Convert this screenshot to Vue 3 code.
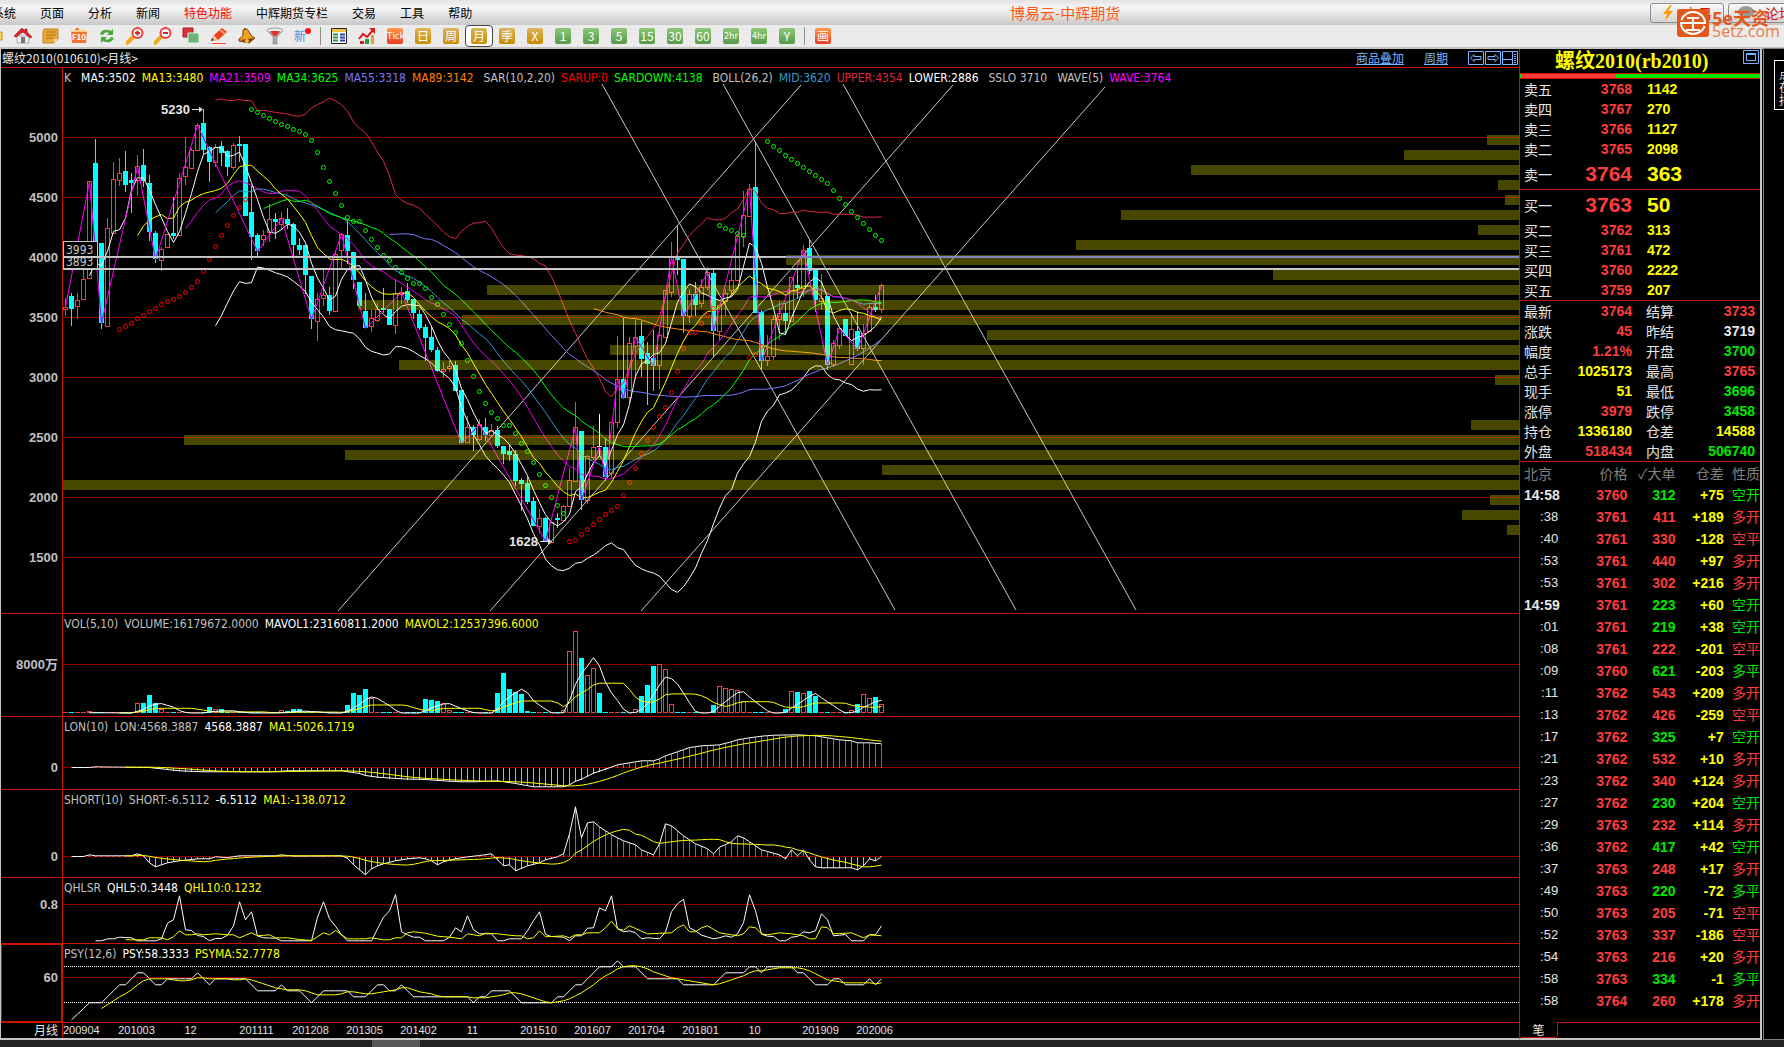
<script setup>
const STEP = 6
const FIRST = 65
const xAt = (i) => FIRST + i * STEP + 0.5

const menus = ['系统', '页面', '分析', '新闻', '特色功能', '中辉期货专栏', '交易', '工具', '帮助']

const tools = [
  'folder', 'home', 'note', 'f10', 'refresh', 'zoomin', 'zoomout', 'copy', 'pen', 'bell', 'filter', 'new', '|',
  'table', 'chart', 'Tick', '日', '周', '月', '季', 'X', '1', '3', '5', '15', '30', '60', '2hr', '4hr', 'Y', '|', '画',
]
const icons = ['folder', 'home', 'note', 'f10', 'refresh', 'zoomin', 'zoomout', 'copy', 'pen', 'bell', 'filter', 'new', 'table', 'chart']
const tone = (t) => (['Tick', '画'].includes(t) ? 'hot' : ['日', '周', '月', '季', 'X'].includes(t) ? 'gold' : 'leaf')

// kind, high, body top, body bottom, low (r = up, c = down, w = unchanged)
const candles = `r298,307,309,316 c293,296,309,326 r293,300,306,319 r270,279,299,299 r181,181,278,278 c139,163,243,243
c243,243,323,329 r218,228,326,326 r162,179,233,233 r158,173,180,186 c151,171,185,192 c173,180,183,213 r155,166,180,196
c149,165,181,187 c175,183,232,241 c231,233,259,263 r247,249,260,271 r234,234,247,247 c197,233,236,239 r173,178,235,235
r137,167,176,185 r148,150,168,168 r123,125,150,150 c109,123,150,154 c146,147,162,182 r144,147,162,167 c141,146,153,166
c150,151,167,176 r143,145,167,170 c136,144,146,162 c144,144,216,216 c186,212,237,260 c233,235,251,256 r230,235,239,246
r204,219,232,242 c213,219,222,239 r212,218,224,230 c208,219,224,229 c223,224,245,257 c238,245,250,255 c245,245,275,294
c276,276,319,329 r293,299,321,341 r270,295,298,306 c287,295,311,315 r250,254,311,311 r233,234,250,268 c220,235,251,264
c252,252,280,289 c282,282,306,308 c293,311,328,328 r310,318,326,332 r303,309,320,322 c288,308,310,313 c309,309,325,325
r279,293,325,334 r287,292,294,304 c283,291,300,303 c299,299,313,319 c310,314,328,330 c324,327,338,361 c326,337,350,352
c347,350,371,372 r362,369,371,378 r361,366,368,372 c361,365,391,391 c390,390,443,444 r416,427,442,443 c425,427,435,451
r419,424,439,441 c418,427,435,441 r424,430,435,435 c426,430,446,448 c446,446,454,464 c444,451,455,461 c450,454,481,486
c478,480,484,511 c477,483,502,504 c497,501,526,526 r509,518,526,533 c517,518,541,541 r522,522,542,542 c513,518,520,528
r505,506,520,520 r468,480,506,506 r402,427,481,481 c431,431,500,510 r455,456,500,504 r426,447,457,460 w414,446,446,456
c438,447,477,481 r422,422,473,479 r336,379,422,428 c318,379,398,399 r337,343,397,403 r318,337,346,379 c321,336,359,377
c342,353,364,405 c330,358,366,391 r327,335,365,389 r290,290,337,337 r242,257,292,297 c226,257,260,275 c259,259,316,333
r289,294,316,323 c282,294,305,316 r279,287,303,308 r267,272,287,290 c269,273,331,357 r305,305,331,341 r289,293,301,316
r268,280,290,297 r234,236,280,280 r191,215,236,247 r184,189,216,216 c141,187,313,313 c310,312,361,369 r335,356,360,366
r315,319,356,360 r301,313,319,340 c303,313,321,335 r277,277,321,321 c268,285,288,299 r245,250,288,297 c240,248,271,274
c270,270,300,312 r274,298,301,310 c296,296,365,370 r340,343,364,367 r328,328,345,349 c319,319,336,336 r313,329,364,364
c311,331,349,351 r324,333,348,365 r304,307,331,331 c295,307,310,312 r284,285,309,313`
  .split(/\s+/)
  .map((s, i) => {
    const [h, t, b, l] = s.slice(1).split(',').map(Number)
    return { kind: s[0], x: FIRST + i * STEP, h, t, b, l, close: s[0] === 'r' ? t : b }
  })
const COUNT = candles.length

const mean = (v, n) => v.map((_, i) => {
  const w = v.slice(Math.max(0, i - n + 1), i + 1)
  return i < n - 1 || w.some((k) => k == null) ? null : w.reduce((a, b) => a + b, 0) / n
})
const points = (v) => v.map((y, i) => (y == null ? '' : `${xAt(i)},${y.toFixed(1)}`)).filter(Boolean).join(' ')
const lineOf = (color, v) => ({ color, pts: points(v) })

const closes = candles.map((c) => c.close + 0.5)
const mid = mean(closes, 26)
const band = (k) => mid.map((m, i) => {
  if (m == null) return null
  const w = closes.slice(i - 25, i + 1)
  return m + k * Math.sqrt(w.reduce((a, y) => a + (y - m) ** 2, 0) / 26)
})
const mainLines = [
  lineOf('#dc2846', band(-2)), lineOf('#ffffff', band(2)), lineOf('#2d9bd2', mid),
  lineOf('#ff8c00', mean(closes, 89)), lineOf('#7878ff', mean(closes, 55)), lineOf('#00ff00', mean(closes, 34)),
  lineOf('#e600e6', mean(closes, 21)), lineOf('#ffff00', mean(closes, 13)), lineOf('#ffffff', mean(closes, 5)),
]
const wave = [0, 4, 6, 12, 15, 22, 32, 36, 41, 46, 50, 56, 66, 69, 80, 85, 86, 89, 90, 92, 93, 95, 98, 101, 103, 107, 108, 114, 116, 123, 127, 129, 132, 136]
  .map((i) => `${xAt(i)},${closes[i]}`).join(' ')

const sar = [
  ['#ff0000', 9, [329, 326, 323, 318, 315, 311, 308, 304, 301, 299, 296, 292, 287, 281, 271, 259, 246, 235, 225, 215, 207, 199]],
  ['#00ff00', 31, [109, 112, 115, 118, 121, 124, 126, 129, 131, 134, 140, 152, 167, 181, 193, 205, 217, 221, 221, 230, 239, 247, 255, 260, 267, 272, 278, 283, 283, 288, 297, 304, 314, 324, 332, 343, 360, 376, 391, 403, 412, 418, 425, 425, 433, 443, 451, 462, 474, 485, 497, 505, 513]],
  ['#ff0000', 84, [541, 540, 534, 529, 524, 519, 514, 510, 506, 495, 482, 468, 453, 440, 427, 416, 407, 392, 371, 348, 332, 332, 323, 315, 308]],
  ['#00ff00', 109, [225, 228, 230, 233, 235]],
  ['#ff0000', 114, [357, 354, 346]],
  ['#00ff00', 117, [141, 146, 150, 155, 159, 163, 167, 171, 175, 179, 183, 190, 198, 204, 211, 217, 223, 229, 235, 240]],
].flatMap(([color, from, ys]) => ys.map((y, k) => ({ color, y, x: xAt(from + k) })))

// price distribution: top of the bar and its distance from the right edge
const profile = [[135, 32], [150, 115], [165, 328], [180, 21], [195, 14], [210, 398], [225, 41], [240, 443], [255, 733], [270, 246], [285, 1032], [300, 1161], [315, 1057], [330, 532], [345, 909], [360, 1120], [375, 24], [420, 48], [435, 1335], [450, 1174], [465, 637], [480, 1456], [495, 29], [510, 57], [525, 12]]

const rays = [[602, 84, 895, 610], [723, 84, 1016, 610], [843, 84, 1136, 610], [338, 611, 801, 85], [490, 611, 953, 85], [641, 611, 1105, 87]]

const volumes = Array(COUNT).fill(1)
const setVol = (from, ...v) => v.forEach((n, k) => { volumes[from + k] = n })
setVol(4, 2); setVol(12, 10, 10, 18, 10, 4); setVol(24, 6, 4, 4); setVol(36, 3, 2, 4, 4)
setVol(47, 8, 20, 18, 24, 15); setVol(60, 14, 13, 12, 10, 3); setVol(72, 20, 40, 24, 21, 19, 2)
setVol(83, 3, 62, 82, 55, 38, 45, 20); setVol(95, 4, 17, 28, 47, 49, 44, 9); setVol(108, 8, 27, 25, 24, 23, 12)
setVol(120, 4, 22, 21, 20, 22, 17); setVol(131, 3, 9, 19, 15, 16, 9)
const volLine = (n) => mean(volumes.map((v) => 714 - v), n)

// "index:value" knots, joined by straight lines; a value is a third of a pixel below y = 600
function knots(text) {
  const k = text.split(' ').map((s) => s.split(':').map(Number))
  const out = Array(COUNT).fill(null)
  k.forEach(([i, v], n) => {
    out[i] = 600.5 + v / 3
    const next = k[n + 1]
    if (next) for (let j = i + 1; j < next[0]; j++) out[j] = 600.5 + (v + ((next[1] - v) * (j - i)) / (next[0] - i)) / 3
  })
  return out
}
const lon = knots('1:501 4:501 5:499 14:501 16:505 19:511 23:514 34:514 37:511 46:511 49:519 50:525 52:530 56:535 60:537 63:541 66:544 68:544 72:541 75:549 78:559 83:559 84:553 85:542 86:536 88:518 89:512 90:506 92:493 94:487 96:481 98:481 99:475 100:466 102:454 104:441 106:436 109:433 111:424 112:418 114:412 116:407 118:404 122:403 125:406 127:412 129:418 131:421 132:427 134:427 136:430')
const short = knots('1:768 3:768 4:763 5:766 11:766 12:760 13:766 14:787 15:799 16:793 17:787 19:781 22:775 24:775 25:769 27:771 29:766 35:766 36:763 38:767 46:766 47:773 48:793 49:808 50:823 51:805 52:796 53:790 55:781 57:775 59:772 60:775 61:781 62:793 63:784 65:775 67:769 69:765 71:760 72:778 73:796 74:793 75:811 77:796 79:787 80:778 82:769 83:760 84:700 85:619 86:712 87:667 88:664 89:679 91:703 93:721 95:733 96:748 98:763 99:730 100:670 101:676 103:706 105:730 107:745 108:760 109:740 111:724 112:706 113:712 115:736 116:748 119:763 120:775 121:748 122:766 123:749 124:778 125:799 126:802 131:802 132:808 133:796 134:775 135:781 136:768')
const qhl5 = knots('5:1021 6:1021 7:1015 8:1015 9:1010 11:1012 12:1021 15:1021 16:1015 17:968 18:958 19:886 20:988 21:990 22:1005 23:1008 24:1021 25:1014 26:1014 27:1004 28:976 29:904 30:958 31:934 32:1006 33:1012 35:1013 36:1021 41:1021 42:950 43:904 44:955 45:977 46:1003 47:1021 51:1021 52:985 53:950 54:931 55:882 56:994 57:1003 58:1010 59:1010 60:1021 63:1021 64:1010 65:982 66:994 67:946 68:988 69:1000 71:1000 72:1021 73:1021 74:1015 76:1015 77:991 78:961 79:934 80:1002 81:1008 83:1010 84:1021 85:1006 86:1006 87:983 88:982 89:922 90:931 91:886 92:985 93:994 94:991 95:997 96:1015 97:1012 99:1015 100:995 101:934 102:910 103:896 104:982 105:991 106:1004 108:1015 109:1012 110:1006 111:1010 112:1000 113:967 114:883 115:931 116:1001 117:1007 118:1008 119:1021 120:1021 121:1010 122:1008 123:994 124:997 125:991 126:940 127:958 128:1006 130:1002 131:1021 133:1021 134:1003 135:1003 136:976')
const qhl10 = knots('10:1018 13:1018 14:1012 16:1012 17:1018 18:1009 19:991 20:1003 21:1003 22:1000 23:1003 25:1000 27:1003 28:1003 29:1012 31:997 32:1006 34:1003 35:1012 37:1012 39:1017 41:1020 43:997 44:1003 45:990 47:1015 50:1015 51:1012 53:1018 54:1018 55:1012 56:1012 57:997 58:994 60:998 62:1007 64:1010 66:1015 67:1000 69:1006 70:998 72:1000 75:1006 76:1006 77:1015 78:1012 79:991 80:1009 83:1006 84:1012 85:1003 86:1003 87:997 89:997 90:982 91:962 92:985 93:989 94:976 95:984 97:1000 101:997 102:982 103:973 104:994 105:994 106:982 107:976 109:997 112:1006 113:1000 114:979 115:982 116:1000 117:1003 119:997 121:1000 123:1006 124:1015 125:1015 126:979 127:982 128:1000 131:997 133:1012 134:1003 136:1006')
const psy = knots('1:1258 4:1207 6:1207 9:1153 10:1153 12:1117 13:1117 15:1153 16:1153 17:1135 21:1135 22:1117 24:1153 25:1135 30:1135 32:1171 35:1171 36:1153 37:1171 39:1171 41:1207 43:1171 47:1171 48:1189 50:1189 52:1153 53:1153 54:1171 55:1171 56:1153 58:1189 67:1189 68:1207 69:1189 70:1189 71:1171 74:1171 76:1207 81:1207 82:1189 83:1189 85:1153 86:1153 89:1099 91:1099 92:1081 93:1099 95:1099 97:1135 102:1135 103:1153 108:1153 110:1117 113:1117 114:1099 115:1099 116:1117 117:1099 121:1099 122:1117 123:1117 125:1153 127:1153 128:1135 129:1135 130:1153 133:1153 134:1135 135:1153 136:1135')

const stems = (v, zero) => v.map((y, i) => (y == null ? null : {
  x: FIRST + i * STEP, y: Math.round(Math.min(y, zero)), h: Math.round(Math.abs(y - zero)), color: y > zero ? '#00ffff' : '#ff3c3c',
})).filter((s) => s && s.h > 0)

const G = '#c0c0c0', W = '#ffffff', Y = '#ffff00'
const panels = [
  {
    id: 'k', top: 68, height: 545, axis: [5000, 4500, 4000, 3500, 3000, 2500, 2000, 1500].map((t, n) => [137 + n * 60, t]),
    legend: [['K', G, 1], ['MA5:3502', W], ['MA13:3480', Y], ['MA21:3509', '#ff00ff'], ['MA34:3625', '#00ff00'], ['MA55:3318', '#7878ff'], ['MA89:3142', '#ff8000', 1],
      ['SAR(10,2,20)', G], ['SARUP:0', '#ff0000'], ['SARDOWN:4138', '#00ff00', 1], ['BOLL(26,2)', G], ['MID:3620', '#2d9bd2'], ['UPPER:4354', '#dc2846'], ['LOWER:2886', W, 1],
      ['SSLO 3710', G, 1], ['WAVE(5)', G], ['WAVE:3764', '#ff00ff']],
    lines: mainLines,
  },
  {
    id: 'vol', top: 614, height: 102, axis: [[664, '8000万']],
    legend: [['VOL(5,10)', G], ['VOLUME:16179672.0000', G], ['MAVOL1:23160811.2000', W], ['MAVOL2:12537396.6000', Y]],
    lines: [lineOf(Y, volLine(10)), lineOf(W, volLine(5))],
  },
  {
    id: 'lon', top: 717, height: 72, axis: [[767, '0']], stems: stems(lon, 767.5),
    legend: [['LON(10)', G], ['LON:4568.3887', G], ['4568.3887', W], ['MA1:5026.1719', Y]],
    lines: [lineOf(W, lon), lineOf(Y, mean(lon, 10))],
  },
  {
    id: 'short', top: 790, height: 87, axis: [[856, '0']], stems: stems(short, 856.5),
    legend: [['SHORT(10)', G], ['SHORT:-6.5112', G], ['-6.5112', W], ['MA1:-138.0712', Y]],
    lines: [lineOf(W, short), lineOf(Y, mean(short, 10))],
  },
  {
    id: 'qhl', top: 878, height: 65, axis: [[904, '0.8']],
    legend: [['QHLSR', G], ['QHL5:0.3448', W], ['QHL10:0.1232', Y]],
    lines: [lineOf(W, qhl5), lineOf(Y, qhl10)],
  },
  {
    id: 'psy', top: 944, height: 78, axis: [[977, '60']], guides: [966, 1002],
    legend: [['PSY(12,6)', G], ['PSY:58.3333', W], ['PSYMA:52.7778', Y]],
    lines: [lineOf(W, psy), lineOf(Y, mean(psy, 6))],
  },
]

const dates = [[12, '201003'], [21, '12'], [32, '201111'], [41, '201208'], [50, '201305'], [59, '201402'], [68, '11'], [79, '201510'], [88, '201607'], [97, '201704'], [106, '201801'], [115, '10'], [126, '201909'], [135, '202006']]

const asks = [['卖五', 3768, 1142], ['卖四', 3767, 270], ['卖三', 3766, 1127], ['卖二', 3765, 2098], ['卖一', 3764, 363]]
const bids = [['买一', 3763, 50], ['买二', 3762, 313], ['买三', 3761, 472], ['买四', 3760, 2222], ['买五', 3759, 207]]
const stats = [
  ['最新', '3764', 'r', '结算', '3733', 'r'], ['涨跌', '45', 'r', '昨结', '3719', 'w'], ['幅度', '1.21%', 'r', '开盘', '3700', 'g'],
  ['总手', '1025173', 'y', '最高', '3765', 'r'], ['现手', '51', 'y', '最低', '3696', 'g'], ['涨停', '3979', 'r', '跌停', '3458', 'g'],
  ['持仓', '1336180', 'y', '仓差', '14588', 'y'], ['外盘', '518434', 'r', '内盘', '506740', 'g'],
]
const ticks = `14:58 3760 312 +75 空开 g|:38 3761 411 +189 多开 r|:40 3761 330 -128 空平 r|:53 3761 440 +97 多开 r|:53 3761 302 +216 多开 r|14:59 3761 223 +60 空开 g|:01 3761 219 +38 空开 g|:08 3761 222 -201 空平 r|:09 3760 621 -203 多平 g|:11 3762 543 +209 多开 r|:13 3762 426 -259 空平 r|:17 3762 325 +7 空开 g|:21 3762 532 +10 多开 r|:23 3762 340 +124 多开 r|:27 3762 230 +204 空开 g|:29 3763 232 +114 多开 r|:36 3762 417 +42 空开 g|:37 3763 248 +17 多开 r|:49 3763 220 -72 多平 g|:50 3763 205 -71 空平 r|:52 3763 337 -186 空平 r|:54 3763 216 +20 多开 r|:58 3763 334 -1 多平 g|:58 3764 260 +178 多开 r`
  .split('|').map((s) => s.split(' '))
</script>

<template>
  <div class="app">
    <header class="menubar">
      <nav class="menus">
        <a v-for="m in menus" :key="m" href="#" :class="{ special: m === '特色功能' }">{{ m }}</a>
      </nav>
      <h1>博易云-中辉期货</h1>
      <div class="actions">
        <button type="button"><svg width="12" height="16"><path d="M8 0 1 9h4l-2 7 8-10H6l4-6z" fill="#f90" /></svg>交易</button>
        <button type="button"><svg width="18" height="14"><ellipse cx="9" cy="6" rx="8" ry="6" fill="#999" /><path d="M4 9v5l6-4z" fill="#999" /></svg>论坛</button>
      </div>
      <div class="watermark">
        <svg width="32" height="28" viewBox="0 0 32 28">
          <rect width="32" height="28" rx="3" fill="#e4571b" />
          <ellipse cx="16" cy="14" rx="12" ry="11" fill="none" stroke="#fff" stroke-width="2" />
          <path d="M10 9h12M4 14h24M16 9v12M9 21h14" fill="none" stroke="#fff" stroke-width="2" />
          <path d="M2 11h3v2H2zM27 15h3v2h-3z" fill="#e4571b" />
        </svg>
        <div class="brand"><b>5e天资</b><span>5etz.com</span></div>
      </div>
    </header>

    <div class="toolbar">
      <template v-for="(t, n) in tools" :key="n">
        <i v-if="t === '|'" class="sep"></i>
        <button v-else type="button" :class="{ active: t === '月' }" :aria-label="t">
          <svg v-if="icons.includes(t)" width="18" height="18" viewBox="0 0 18 18">
            <path v-if="t === 'folder'" d="M1 5h15v8H1z" fill="#ffd452" stroke="#c88a10" />
            <g v-else-if="t === 'home'">
              <path d="M3 9h12v7H3z" fill="#f3f3f3" stroke="#aaa" /><path d="M7 10h4v6H7z" fill="#777" />
              <path d="M0 9 8 1l3 3V2h2v3l5 5-2 1-7-6-7 5z" fill="#e0252b" stroke="#8e1014" stroke-width=".6" />
            </g>
            <g v-else-if="t === 'note'">
              <path d="M2 2h14v10l-4 4H1V5z" fill="#e9a93a" stroke="#c58418" /><path d="M4 5h10M4 8h10M4 11h7" stroke="#b26f0c" /><path d="M12 16v-4h4z" fill="#ffe0a0" />
            </g>
            <g v-else-if="t === 'f10'">
              <path d="M1 3h4l1-2h3v2h8l-1 13H2z" fill="#f0722c" /><path d="M1 3h16v2H1z" fill="#ffd08a" />
              <text x="9" y="13" text-anchor="middle" font-size="8" font-weight="bold" fill="#fff">F10</text>
            </g>
            <g v-else-if="t === 'refresh'" fill="#4aa83a">
              <path d="M2 7q2-5 8-4 2 0 3 1l2-2v6H9l2-2Q7 4 5 8z" /><path d="M16 11q-2 5-8 4-2 0-3-1l-2 2v-6h6l-2 2q4 2 6-2z" />
            </g>
            <g v-else-if="t === 'zoomin' || t === 'zoomout'">
              <path d="m1 16 6-6" stroke="#f5a81c" stroke-width="4" stroke-linecap="round" /><circle cx="11.500" cy="6" r="5" fill="#fff" stroke="#f0403c" stroke-width="2" />
              <path :d="t === 'zoomin' ? 'M9 6h5M11.500 3.500v5' : 'M9 6h5'" stroke="#e2201c" stroke-width="2" />
            </g>
            <g v-else-if="t === 'copy'">
              <path d="M1 1h10v9H1z" fill="#d8343a" stroke="#a41f24" /><path d="M6 6h11v10H6z" fill="#69b376" stroke="#e3efe4" />
            </g>
            <g v-else-if="t === 'pen'">
              <path d="m1 14 3-6 8-7 5 4-9 8z" fill="#f0401c" /><path d="m1 14 3-6 4 5z" fill="#f3c488" /><path d="m1 14 1-3 2 2z" fill="#333" /><path d="m10 3 5 4" stroke="#ff9a7a" stroke-width="2" /><path d="M2 16.500h14" stroke="#ff4a3a" />
            </g>
            <g v-else-if="t === 'bell'">
              <path d="M5 3q4-3 6 2 1 4 6 6l-6 5-10-2v-2q5-2 4-9z" fill="#f0a31e" stroke="#7a3c08" /><path d="m2 13 14-2-5 5z" fill="#7a3c08" /><circle cx="9" cy="14" r="2" fill="#f6c040" /><circle cx="7" cy="2" r="1" fill="#8e4a10" />
            </g>
            <g v-else-if="t === 'filter'">
              <path d="m2 4 5 6v7h4v-7l5-6z" fill="#a6a6a6" stroke="#777" stroke-width=".5" /><ellipse cx="9" cy="3.500" rx="8" ry="2.500" fill="#eee" stroke="#999" /><path d="M4 4h10l-4 5H8z" fill="#e83030" />
            </g>
            <g v-else-if="t === 'new'">
              <text x="6" y="14" text-anchor="middle" font-size="12" fill="#4a90e2">新</text><circle cx="14" cy="4" r="3" fill="#f11" />
            </g>
            <g v-else-if="t === 'table'">
              <path d="M1.500 1.500h15v15h-15z" fill="#fff" stroke="#222" /><path d="M2 2h14v3H2z" fill="#f5c23c" /><path d="M3 7.500h5M3 10.500h5M3 13.500h5" stroke="#24a03a" stroke-width="2" /><path d="M10 7.500h5M10 10.500h5M10 13.500h5" stroke="#2840a8" stroke-width="2" />
            </g>
            <g v-else-if="t === 'chart'">
              <path d="M2 14h4v3H2z" fill="#c22" /><path d="M7 12h4v5H7z" fill="#2a9a3a" /><path d="M13 8h3v9h-3z" fill="#e8a020" /><path d="m1 12 4-5 4 3 7-8" fill="none" stroke="#e4161c" stroke-width="2" /><path d="M11 1h6v6z" fill="#e4161c" />
            </g>
          </svg>
          <span v-else class="chip" :class="[tone(t), { small: t.length > 2 }]">{{ t }}</span>
        </button>
      </template>
    </div>

    <main class="desk">
      <section class="chart">
        <div class="caption">
          <span>螺纹2010(010610)&lt;月线&gt;</span>
          <a href="#" class="first">商品叠加</a>
          <a href="#">周期</a>
          <div class="tiles">
            <svg width="16" height="14"><path d="M.5.5h15v13H.5zM6 3.500v2h7v3H6v2L2.500 7z" /></svg>
            <svg width="16" height="14"><path d="M.5.5h15v13H.5zM10 3.500v2H3v3h7v2L13.500 7z" /></svg>
            <svg width="16" height="14"><path d="M.5.5h15v13H.5zM10.500 1v13M1 8.500h9M12 3.500h2M12 5.500h2M12 7.500h2M12 9.500h2M12 11.500h2" /></svg>
          </div>
        </div>

        <div v-for="p in panels" :key="p.id" class="panel" :class="p.id">
          <svg class="axis" :height="p.height">
            <g :transform="`translate(-1,${-p.top})`">
              <text v-for="a in p.axis" :key="a[0]" x="58" :y="a[0] + 5" text-anchor="end">{{ a[1] }}</text>
            </g>
          </svg>
          <svg class="plot" width="100%" :height="p.height">
            <g :transform="`translate(-63,${-p.top})`">
              <g class="sharp">
                <line v-for="a in p.axis" :key="a[0]" x1="64" x2="110%" :y1="a[0] + 0.5" :y2="a[0] + 0.5" stroke="#a00000" stroke-dasharray="1 1" />
                <line v-for="g in p.guides" :key="g" x1="64" x2="110%" :y1="g + 0.5" :y2="g + 0.5" stroke="#fff" stroke-dasharray="1 1" />
                <rect v-for="s in p.stems" :key="s.x" :x="s.x" :y="s.y" width="1" :height="s.h" :fill="s.color" />
                <template v-if="p.id === 'vol'">
                  <template v-for="(c, i) in candles" :key="i">
                    <rect v-if="c.kind === 'r' && volumes[i] > 1" :x="c.x - 1.5" :y="713.5 - volumes[i]" width="4" :height="volumes[i] - 1" fill="none" stroke="#ff3c3c" />
                    <rect v-else :x="c.x - 2" :y="713 - volumes[i]" width="5" :height="volumes[i]" :fill="c.kind === 'r' ? '#ff3c3c' : '#00ffff'" />
                  </template>
                </template>
                <template v-if="p.id === 'k'">
                  <template v-for="c in candles" :key="c.x">
                    <path v-if="c.kind === 'r'" :d="`M${c.x + 0.5} ${c.h}V${c.t}M${c.x + 0.5} ${c.b}V${c.l}M${c.x - 1.5} ${c.t + 0.5}h4V${c.b + 0.5}h-4z`" fill="none" stroke="#ff3c3c" />
                    <path v-else-if="c.kind === 'w'" :d="`M${c.x + 0.5} ${c.h}V${c.l}M${c.x - 2} ${c.t + 0.5}h5`" stroke="#fff" />
                    <path v-else :d="`M${c.x} ${c.h}h1V${c.t}h2V${c.b}h-2V${c.l}h-1V${c.b}h-2V${c.t}h2z`" fill="#00ffff" />
                  </template>
                </template>
              </g>
              <template v-if="p.id === 'k'">
                <line v-for="r in rays" :key="r[0]" :x1="r[0]" :y1="r[1]" :x2="r[2]" :y2="r[3]" stroke="#c8c8c8" />
              </template>
              <polyline v-for="(l, n) in p.lines" :key="n" :points="l.pts" fill="none" :stroke="l.color" />
              <template v-if="p.id === 'k'">
                <clipPath id="falling">
                  <template v-for="c in candles" :key="c.x"><rect v-if="c.kind === 'c'" :x="c.x - 2" :y="c.t" width="5" :height="c.b - c.t" /></template>
                </clipPath>
                <polyline :points="wave" fill="none" stroke="#ff00ff" />
                <polyline :points="wave" fill="none" stroke="#3c3cff" clip-path="url(#falling)" />
                <circle v-for="(s, n) in sar" :key="n" :cx="s.x" :cy="s.y + 0.5" r="2" fill="none" :stroke="s.color" />
                <text x="190" y="114" text-anchor="end" class="mark">5230</text>
                <path d="M192 109.500h9" stroke="#ddd" /><path d="m203 109.500-4-3v6z" fill="#ddd" />
                <text x="538" y="546" text-anchor="end" class="mark">1628</text>
                <path d="M540 541.500h9" stroke="#ddd" /><path d="m552 541.500-4-3v6z" fill="#ddd" />
              </template>
            </g>
            <g v-if="p.id === 'k'" class="sharp" transform="translate(0,-68)">
              <rect v-for="b in profile" :key="b[0]" x="100%" :y="b[0]" :width="b[1]" height="10" :transform="`translate(${-b[1]},0)`" fill="#ffff00" fill-opacity=".28" />
              <rect x="0" y="256" width="100%" height="2" fill="#c8c8c8" />
              <line x1="0" x2="100%" y1="257.500" y2="257.500" stroke="#4fd0c0" stroke-dasharray="1 1" />
              <rect x="100%" y="256" width="733" height="2" transform="translate(-733,0)" fill="#8484c8" />
              <rect x="0" y="268" width="100%" height="2" fill="#c8c8c8" />
              <rect x=".5" y="257.500" width="34" height="11" stroke="#c8c8c8" /><text x="3" y="266" class="level">3893</text>
              <rect x=".5" y="241.500" width="34" height="15" stroke="#c8c8c8" /><text x="3" y="254" class="level">3993</text>
            </g>
          </svg>
          <div class="legend">
            <span v-for="l in p.legend" :key="l[0]" :style="{ color: l[1] }" :class="{ end: l[2] }">{{ l[0] }}</span>
          </div>
        </div>

        <div class="dates">
          <span class="period">月线</span>
          <svg width="100%" height="15">
            <text x="0" y="11">200904</text>
            <text v-for="d in dates" :key="d[0]" :x="xAt(d[0]) - 64" y="11" text-anchor="middle">{{ d[1] }}</text>
          </svg>
        </div>
      </section>

      <aside class="quote">
        <div class="name">
          <h2>螺纹2010(rb2010)</h2>
          <svg width="16" height="14"><path d="M.5.5h15v13H.5zM3.500 3.500h9v7h-9zM3 4.500h10" /></svg>
        </div>
        <div class="ratio"><i></i></div>
        <table class="depth">
          <tbody>
            <tr v-for="(r, n) in asks" :key="n" :class="{ best: n === 4 }"><th>{{ r[0] }}</th><td class="r">{{ r[1] }}</td><td class="y lots">{{ r[2] }}</td></tr>
          </tbody>
        </table>
        <table class="depth">
          <tbody>
            <tr v-for="(r, n) in bids" :key="n" :class="{ best: n === 0 }"><th>{{ r[0] }}</th><td class="r">{{ r[1] }}</td><td class="y lots">{{ r[2] }}</td></tr>
          </tbody>
        </table>
        <table class="stats">
          <tbody>
            <tr v-for="s in stats" :key="s[0]"><th>{{ s[0] }}</th><td :class="s[2]">{{ s[1] }}</td><th class="second">{{ s[3] }}</th><td :class="s[5]">{{ s[4] }}</td></tr>
          </tbody>
        </table>
        <table class="ticks">
          <thead>
            <tr><th class="time">北京</th><th>价格</th><th>✓大单</th><th>仓差</th><th>性质</th></tr>
          </thead>
          <tbody>
            <tr v-for="(t, n) in ticks" :key="n">
              <td class="time" :class="{ sec: t[0].length < 4 }">{{ t[0] }}</td><td class="r">{{ t[1] }}</td><td :class="t[5]">{{ t[2] }}</td><td class="y">{{ t[3] }}</td><td :class="t[5]" class="kind">{{ t[4] }}</td>
            </tr>
          </tbody>
        </table>
        <div class="tabs"><button type="button">笔</button><i></i></div>
      </aside>

      <div class="side"><p>点<br>在<br>排</p></div>
    </main>
    <footer class="taskbar"><i></i></footer>
  </div>
</template>

<style>
body { margin: 0; background: #222426; overflow: hidden; }
</style>

<style scoped>
.app { overflow: hidden; font: 12px/16px "Noto Sans CJK SC", sans-serif; color: #e6e6e6; }
button { font: inherit; padding: 0; margin: 0; border: 0; background: none; }
a { color: inherit; text-decoration: none; }
svg { display: block; }
i { font-style: normal; }

.menubar { position: relative; display: flex; align-items: center; height: 25px; background: linear-gradient(#e2e2e2, #f6f6f6 30%, #dcdcdc 70%, #c8c8c8); color: #000; }
.menus { display: flex; gap: 24px; margin-left: -8px; white-space: nowrap; }
.menus .special { color: #ff0000; }
h1 { flex: 1; margin: 0; padding-left: 8px; font-size: 15px; font-weight: 400; line-height: 24px; text-align: center; color: #ff5a14; }
.actions { display: flex; gap: 4px; height: 20px; margin-right: -18px; }
.actions button { display: flex; align-items: center; justify-content: center; gap: 10px; width: 74px; border: 1px solid #8c8c8c; border-radius: 3px; background: linear-gradient(#fafafa, #d4d4d4); color: #d21414; font-size: 14px; line-height: 18px; }
.watermark { position: absolute; z-index: 2; right: 3px; top: 9px; display: flex; gap: 3px; color: #e4571b; }
.brand { display: flex; flex-direction: column; width: 69px; white-space: nowrap; }
.brand b { font-size: 18px; line-height: 16px; }
.brand span { font: 16px/13px "Noto Sans", sans-serif; color: #e8814f; }

.toolbar { display: flex; align-items: center; height: 22px; margin-left: -19px; background: #ebebeb; border-bottom: 2px solid #c8c4c0; }
.toolbar button { display: flex; align-items: center; justify-content: center; flex: none; box-sizing: border-box; width: 28px; height: 22px; }
.toolbar .active { border: 1px solid #444; border-radius: 4px; background: #fff; }
.sep { flex: none; width: 1px; height: 18px; margin: 0 4px 0 3px; background: #8c8c8c; }
.chip { width: 16px; height: 16px; border-radius: 2px; font-size: 12px; line-height: 15px; text-align: center; color: #fff; }
.small { font-size: 9px; }
.gold { background: linear-gradient(#dcb45a, #c88c00); }
.leaf { background: linear-gradient(#8cc878, #569a4a); }
.hot { background: linear-gradient(#ff9c50, #e83c1e); }

.desk { display: flex; background: #000; }
.chart { flex: 1; min-width: 0; border-left: 1px solid #c8c4c4; border-bottom: 2px solid #c8c4c4; }
.caption { display: flex; align-items: center; height: 18px; padding: 0 1px; border-bottom: 1px solid #c81400; }
.caption a { margin-right: 20px; color: #78b4ff; text-decoration: underline; }
.caption .first { margin-left: auto; }
.tiles { display: flex; gap: 1px; }
.tiles path, .name path { fill: none; stroke: #78b4ff; }
.panel { display: grid; grid-template-columns: 62px 1fr; border-bottom: 1px solid #c81400; }
.axis { box-sizing: border-box; width: 62px; border-right: 1px solid #c81400; }
.psy .axis { box-shadow: inset 0 0 0 1px #c81400; }
.axis text { font: bold 13px "Liberation Sans", "Noto Sans CJK SC", sans-serif; fill: #c0c0c0; }
.plot, .legend { grid-area: 1 / 2; min-width: 0; }
.sharp { shape-rendering: crispEdges; }
.mark { font: bold 13px "Liberation Sans", sans-serif; fill: #e6e6e6; }
.level { font: 12px "DejaVu Sans Condensed", sans-serif; fill: #c8c8c8; }
.legend { display: flex; gap: 6px; height: 20px; padding-left: 1px; font: 12px/20px "DejaVu Sans Condensed", "DejaVu Sans", sans-serif; white-space: nowrap; }
.legend .end { margin-right: 4px; }
.dates { display: flex; height: 15px; }
.period { flex: none; box-sizing: border-box; width: 62px; padding-right: 4px; border-right: 1px solid #c81400; line-height: 14px; text-align: right; }
.dates text { font: 11px "Liberation Sans", sans-serif; fill: #e0e0e0; }

.quote { display: flex; flex-direction: column; flex: none; width: 240px; border-left: 1px solid #c81400; border-right: 2px solid #c8c4c4; border-bottom: 2px solid #c8c4c4; }
.name { display: flex; height: 24px; padding: 0 1px 0 35px; border-bottom: 1px solid #c81400; }
h2 { flex: 1; margin: 0; font: bold 20px/24px "Liberation Serif", "Noto Sans CJK SC", serif; color: #ffff00; white-space: nowrap; }
.name svg { margin-top: 1px; }
.ratio { height: 4px; padding: 0 1px; border-bottom: 1px solid #c81400; background: #00e600; }
.ratio i { display: block; width: 40%; height: 4px; background: #ff3c3c; }
table { width: 100%; border-collapse: separate; border-spacing: 0; table-layout: fixed; border-bottom: 1px solid #c81400; }
th, td { padding: 0; height: 20px; line-height: 20px; white-space: nowrap; }
th { font-size: 14px; font-weight: 400; text-align: left; }
td { font-family: "Liberation Sans", "Noto Sans CJK SC", sans-serif; font-size: 14px; font-weight: 700; text-align: right; }
.depth th, .stats th:first-child { width: 45px; padding-left: 4px; }
.depth td.r { width: 63px; }
.depth .lots { padding-left: 15px; text-align: left; }
.best th, .best td { height: 30px; }
.best td { font-size: 21px; }
.stats td { width: 63px; }
.stats .second { width: 42px; padding-left: 14px; }
.stats td:last-child { width: auto; padding-right: 5px; }
.ticks { border-bottom: 0; }
.ticks th, .ticks td { height: 22px; line-height: 22px; text-align: right; }
.ticks th { width: 48px; color: #808080; }
.ticks th:nth-child(2) { width: 67px; }
.ticks th:last-child { width: 36px; }
.ticks .time { width: 36px; padding-left: 4px; text-align: left; color: #e6e6e6; }
.ticks th.time { color: #808080; }
td.time { font-size: 14px; }
.ticks .sec { padding-right: 2px; font-size: 13px; font-weight: 400; text-align: right; }
.ticks .kind { font-weight: 400; }
.r { color: #ff3c3c; }
.g { color: #00e600; }
.y { color: #ffff00; }
.w { color: #e6e6e6; }
.tabs { display: flex; height: 16px; margin-top: auto; }
.tabs button { width: 38px; border: 1px solid #c81400; border-width: 0 1px 1px 0; border-radius: 0 0 4px 4px; color: #e6e6e6; line-height: 14px; }
.tabs i { flex: 1; border-top: 1px solid #c81400; }

.side { flex: none; width: 20px; margin: -1px 0 0 1px; border: 1px solid #808080; border-right: 0; overflow: hidden; }
.side p { width: 14px; margin: 11px 0 0 10px; padding: 6px 0 3px 4px; border: 1px solid #fff; font-size: 12px; line-height: 13px; }
.taskbar { height: 7px; background: #222426; }
.taskbar i { display: block; width: 48px; height: 7px; margin-left: 372px; background: #58585a; }
</style>
